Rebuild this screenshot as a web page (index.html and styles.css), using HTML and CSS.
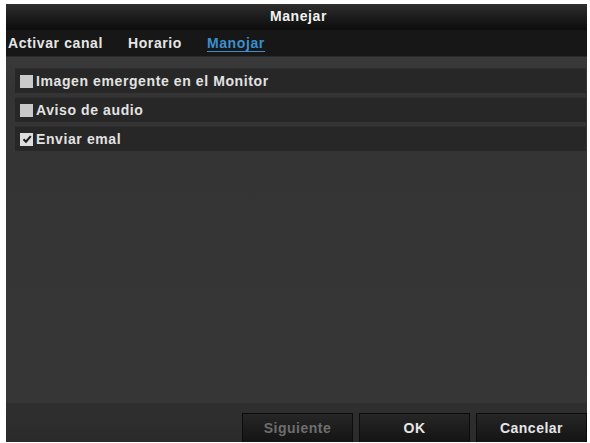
FILE: index.html
```html
<!DOCTYPE html>
<html lang="es">
<head>
<meta charset="utf-8">
<title>Manejar</title>
<link rel="stylesheet" href="styles.css">
</head>
<body>
<div class="window">
  <div class="titlebar">Manejar</div>
  <div class="tabs">
    <span class="tab">Activar canal</span>
    <span class="tab">Horario</span>
    <span class="tab active">Manojar</span>
  </div>
  <div class="content">
    <div class="row"><span class="check"></span><span class="label">Imagen emergente en el Monitor</span></div>
    <div class="row"><span class="check"></span><span class="label">Aviso de audio</span></div>
    <div class="row"><span class="check checked"><svg viewBox="0 0 12 12" width="12" height="12"><path d="M2.5 6.2 L5 8.7 L9.8 3.2" fill="none" stroke="#1b1b1b" stroke-width="2"/></svg></span><span class="label">Enviar emal</span></div>
  </div>
  <div class="footer">
    <button class="btn disabled">Siguiente</button>
    <button class="btn">OK</button>
    <button class="btn">Cancelar</button>
  </div>
</div>
</body>
</html>
```
FILE: styles.css
```css
html, body {
  margin: 0;
  padding: 0;
  background: #ffffff;
}
body {
  font-family: "Liberation Sans", Arial, sans-serif;
  padding: 4px 3px 1px 6px;
  height: 443px;
  box-sizing: border-box;
}
.window {
  height: 438px;
  display: flex;
  flex-direction: column;
  background: #343434;
}
.titlebar {
  height: 26px;
  background: linear-gradient(#2e2e2e, #1a1a1a 55%, #0d0d0d);
  color: #f2f2f2;
  font-size: 14px;
  font-weight: bold;
  letter-spacing: 0.6px;
  display: flex;
  align-items: center;
  justify-content: center;
  padding-left: 4px;
  padding-bottom: 2px;
  box-sizing: border-box;
}
.tabs {
  height: 26px;
  background: #171717;
  display: flex;
  align-items: center;
  padding-left: 2px;
  gap: 25px;
  border-bottom: 1px solid #2a2a2a;
}
.tab {
  color: #e6e6e6;
  font-size: 14px;
  font-weight: bold;
  letter-spacing: 0.6px;
}
.tab.active {
  color: #3b8fcf;
  border-bottom: 1px solid #3b8fcf;
  line-height: 15px;
  margin-top: 2px;
}
.content {
  flex: 1;
  background: linear-gradient(#3a3a3a, #343434 30px, #363636);
  padding: 11px 1px 0 9px;
  display: flex;
  flex-direction: column;
  gap: 4px;
}
.row {
  height: 24px;
  background: #272727;
  border-top: 1px solid #2f2f2f;
  display: flex;
  align-items: center;
  padding-left: 5px;
  gap: 3px;
}
.check {
  width: 13px;
  height: 13px;
  background: #c9c9c9;
  display: flex;
  align-items: center;
  justify-content: center;
}
.check.checked {
  background: #dedede;
}
.label {
  color: #e2e2e2;
  font-size: 14px;
  font-weight: bold;
  letter-spacing: 0.6px;
}
.footer {
  height: 39px;
  background: linear-gradient(#2f2f2f, #2b2b2b);
  display: flex;
  justify-content: flex-end;
  align-items: flex-end;
  gap: 6px;
}
.btn {
  width: 111px;
  height: 29px;
  background: linear-gradient(#262626, #141414);
  border: 1px solid #0c0c0c;
  border-bottom: none;
  color: #e6e6e6;
  font-family: "Liberation Sans", Arial, sans-serif;
  font-size: 14px;
  font-weight: bold;
  letter-spacing: 0.5px;
  padding: 0;
}
.btn.disabled {
  color: #6e6e6e;
}
```
